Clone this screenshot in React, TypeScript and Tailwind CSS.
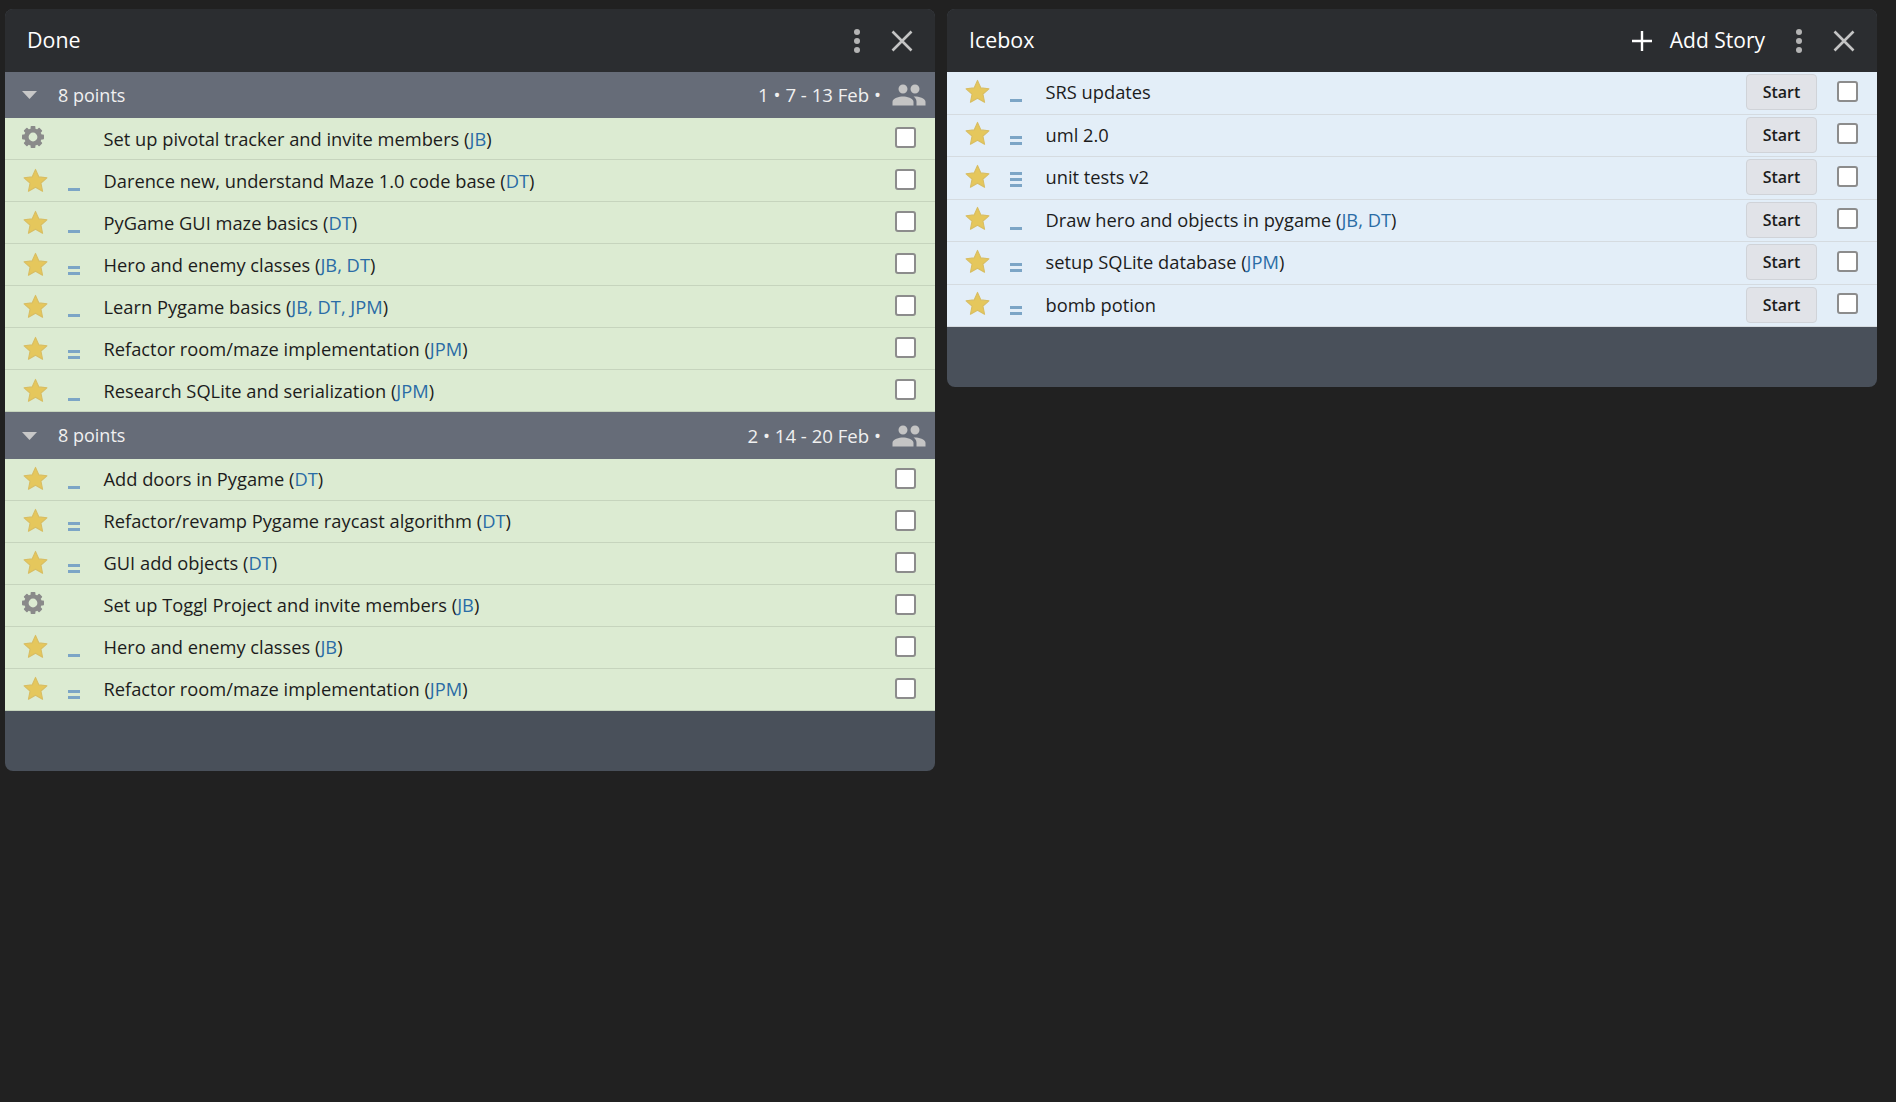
import React from "react";
import { MdPeople } from "react-icons/md";

const font = "font-['Open_Sans',sans-serif]";

function Star() {
  return (
    <svg width="25" height="25" viewBox="0.5 0.5 23 23" className="shrink-0">
      <path d="M12 1.8l3.1 6.9 7.4.8-5.5 5 1.5 7.4L12 18.2l-6.5 3.7L7 14.5l-5.5-5 7.4-.8z" fill="#e5c75c" stroke="#d8bd62" strokeWidth="1" strokeLinejoin="round" />
    </svg>
  );
}

function Gear() {
  const angles = [0, 45, 90, 135, 180, 225, 270, 315];
  return (
    <svg width="24" height="24" viewBox="0 0 24 24" className="shrink-0">
      {angles.map((a) => (
        <rect key={a} x="9.6" y="1" width="4.8" height="5" rx="0.8" fill="#8a8a8a" transform={`rotate(${a} 12 12)`} />
      ))}
      <circle cx="12" cy="12" r="6.6" fill="none" stroke="#8a8a8a" strokeWidth="4.4" />
    </svg>
  );
}

function Estimate({ n }: { n: number }) {
  return (
    <svg width="12" height="30" viewBox="0 0 12 30" className="shrink-0">
      {n >= 1 && <rect x="0" y="27" width="12" height="3" fill="#7ca5c6" />}
      {n >= 2 && <rect x="0" y="21" width="12" height="3" fill="#7ca5c6" />}
      {n >= 3 && <rect x="0" y="15" width="12" height="3" fill="#7ca5c6" />}
    </svg>
  );
}

function Check() {
  return <span className="block w-[21px] h-[21px] bg-white border-2 border-[#8c8c8c] rounded-[3px] shrink-0" />;
}

type Story = { t: string; o?: string; est: number; gear?: boolean };

function Owners({ o }: { o?: string }) {
  if (!o) return null;
  return (
    <>
      {" ("}
      <span className="text-[#2a6ca6]">{o}</span>
      {")"}
    </>
  );
}

function Row({ s, start, up }: { s: Story; start?: boolean; up?: boolean }) {
  const shifted = start || up;
  return (
    <div className={`flex items-center border-b ${start ? "h-[42.5px] bg-[#e3eef8] border-[#d5dbe0]" : "h-[42px] bg-[#dcebd2] border-[#c6d4bd]"}`}>
      <div className={`w-[63px] pl-[18px] shrink-0 flex items-center ${shifted ? "-mt-[3px]" : "-mt-[1px]"}`}>
        {s.gear ? <div className="-ml-[2px] -mt-[2px]"><Gear /></div> : <Star />}
      </div>
      <div className={`w-[35px] shrink-0 h-full flex items-start ${shifted ? "" : "pt-[1px]"}`}>
        {!s.gear && <Estimate n={s.est} />}
      </div>
      <div className={`flex-1 text-[18.3px] text-[#1c1c1c] whitespace-nowrap pl-[0.5px] ${shifted ? "-mt-[2px]" : ""}`}>
        {s.t}
        <Owners o={s.o} />
      </div>
      {start && (
        <button className="w-[71px] h-[36px] mr-[20px] bg-[#e1e3e8] border border-[#d0d3d8] rounded-[4px] text-[16px] font-semibold text-[#1c1c1c] -mt-[1px]">
          Start
        </button>
      )}
      <div className={`mr-[19px] ${shifted ? "-mt-[3px]" : "-mt-[2px]"}`}><Check /></div>
    </div>
  );
}

function Dots() {
  return (
    <svg width="8" height="26" viewBox="0 0 8 26" className="shrink-0">
      <circle cx="4" cy="4" r="3" fill="#b4b4b4" />
      <circle cx="4" cy="13" r="3" fill="#b4b4b4" />
      <circle cx="4" cy="22" r="3" fill="#b4b4b4" />
    </svg>
  );
}

function Close() {
  return (
    <svg width="22" height="22" viewBox="0 0 22 22" className="shrink-0">
      <path d="M1.5 1.5l19 19M20.5 1.5l-19 19" stroke="#c4c4c4" strokeWidth="2.6" />
    </svg>
  );
}

function Header({ title, add }: { title: string; add?: boolean }) {
  return (
    <div className="h-[63px] bg-[#2b2d30] rounded-t-[8px] flex items-center pl-[22px] pr-[22px]">
      <span className="text-[21.4px] text-white -mt-[1px]">{title}</span>
      <div className="flex-1" />
      {add && (
        <div className="flex items-center mr-[30px] text-white text-[21px]">
          <svg width="20" height="20" viewBox="0 0 20 20" className="mr-[18px]">
            <path d="M10 0v20M0 10h20" stroke="#fff" strokeWidth="2.4" />
          </svg>
          <span>Add Story</span>
        </div>
      )}
      <div className="mr-[30px]"><Dots /></div>
      <Close />
    </div>
  );
}

function GroupHeader({ label, tall }: { label: string; tall?: boolean }) {
  return (
    <div className={`${tall ? "h-[47px]" : "h-[46px]"} bg-[#666c78] flex items-center pl-[17px] pr-[8px] text-[18px] text-[#f0f0f0]`}>
      <svg width="15" height="8" viewBox="0 0 15 8" className="mr-[21px] shrink-0">
        <path d="M0 0h15L7.5 8z" fill="#c8c8c8" />
      </svg>
      <span>8 points</span>
      <div className="flex-1" />
      <span className="mr-[10px] whitespace-pre text-[18.6px]">{label}</span>
      <MdPeople className="text-[#c4c4c4] text-[36px] -my-2" />
    </div>
  );
}

const g1: Story[] = [
  { t: "Set up pivotal tracker and invite members", o: "JB", est: 0, gear: true },
  { t: "Darence new, understand Maze 1.0 code base", o: "DT", est: 1 },
  { t: "PyGame GUI maze basics", o: "DT", est: 1 },
  { t: "Hero and enemy classes", o: "JB, DT", est: 2 },
  { t: "Learn Pygame basics", o: "JB, DT, JPM", est: 1 },
  { t: "Refactor room/maze implementation", o: "JPM", est: 2 },
  { t: "Research SQLite and serialization", o: "JPM", est: 1 },
];
const g2: Story[] = [
  { t: "Add doors in Pygame", o: "DT", est: 1 },
  { t: "Refactor/revamp Pygame raycast algorithm", o: "DT", est: 2 },
  { t: "GUI add objects", o: "DT", est: 2 },
  { t: "Set up Toggl Project and invite members", o: "JB", est: 0, gear: true },
  { t: "Hero and enemy classes", o: "JB", est: 1 },
  { t: "Refactor room/maze implementation", o: "JPM", est: 2 },
];
const ice: Story[] = [
  { t: "SRS updates", est: 1 },
  { t: "uml 2.0", est: 2 },
  { t: "unit tests v2", est: 3 },
  { t: "Draw hero and objects in pygame", o: "JB, DT", est: 1 },
  { t: "setup SQLite database", o: "JPM", est: 2 },
  { t: "bomb potion", est: 2 },
];

export default function App() {
  return (
    <div className={`${font} min-h-[1102px] bg-[#212121] flex items-start gap-[12px] pl-[5px] pt-[9px]`}>
      <div className="w-[930px] rounded-[8px] bg-[#49505a]">
        <Header title="Done" />
        <GroupHeader label="1 • 7 - 13 Feb •" />
        {g1.map((s, i) => <Row key={i} s={s} />)}
        <GroupHeader label="2 • 14 - 20 Feb •" tall />
        {g2.map((s, i) => <Row key={i} s={s} up />)}
        <div className="h-[60px]" />
      </div>
      <div className="w-[930px] rounded-[8px] bg-[#49505a]">
        <Header title="Icebox" add />
        {ice.map((s, i) => <Row key={i} s={s} start />)}
        <div className="h-[60px]" />
      </div>
    </div>
  );
}
